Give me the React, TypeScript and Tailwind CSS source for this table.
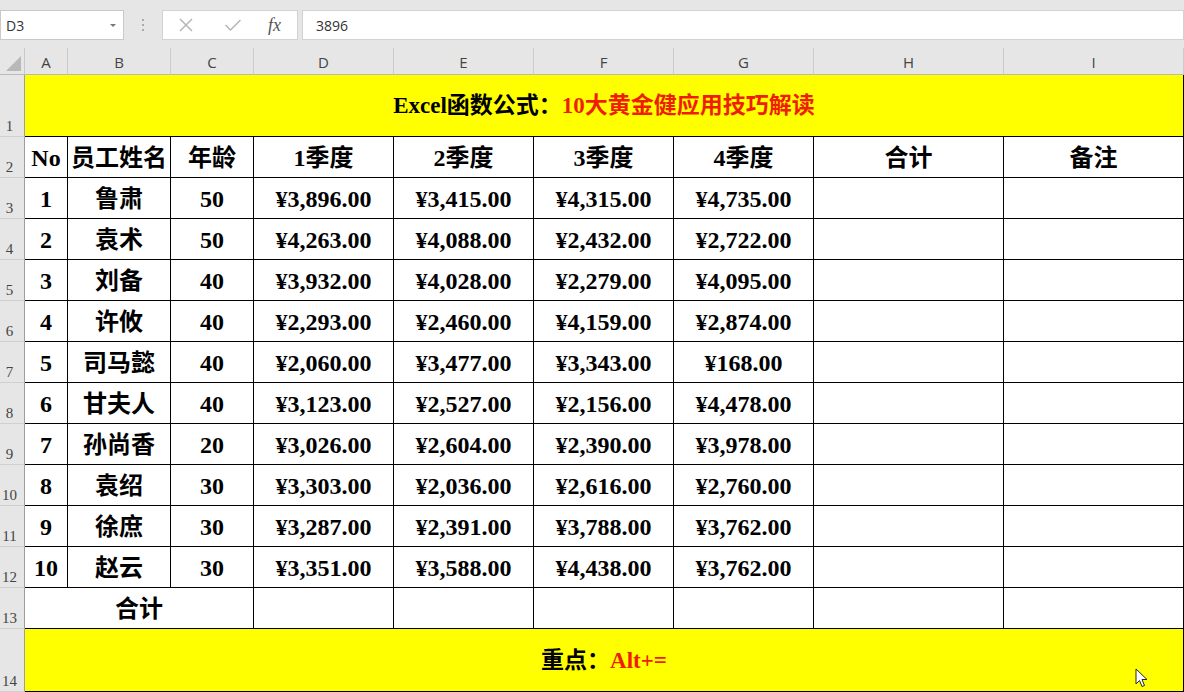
import React from 'react';

const COLS = ['A', 'B', 'C', 'D', 'E', 'F', 'G', 'H', 'I'];

const HEAD = ['No', '员工姓名', '年龄', '1季度', '2季度', '3季度', '4季度', '合计', '备注'];

const ROWS: [number, string, number, number[]][] = [
  [1, '鲁肃', 50, [3896, 3415, 4315, 4735]],
  [2, '袁术', 50, [4263, 4088, 2432, 2722]],
  [3, '刘备', 40, [3932, 4028, 2279, 4095]],
  [4, '许攸', 40, [2293, 2460, 4159, 2874]],
  [5, '司马懿', 40, [2060, 3477, 3343, 168]],
  [6, '甘夫人', 40, [3123, 2527, 2156, 4478]],
  [7, '孙尚香', 20, [3026, 2604, 2390, 3978]],
  [8, '袁绍', 30, [3303, 2036, 2616, 2760]],
  [9, '徐庶', 30, [3287, 2391, 3788, 3762]],
  [10, '赵云', 30, [3351, 3588, 4438, 3762]],
];

const yen = (n: number) =>
  '¥' + n.toLocaleString('en-US', { minimumFractionDigits: 2, maximumFractionDigits: 2 });

const cell =
  'flex items-center justify-center border-r border-b border-black bg-white pt-[2px] font-bold text-[24px] leading-[28px] text-black whitespace-nowrap';

function RowHead({ n }: { n: number }) {
  return (
    <div className="relative overflow-hidden border-b border-r border-b-[#cfcfcf] border-r-[#9e9e9e] bg-[#e6e6e6]">
      <span className="absolute bottom-[1px] left-0 w-[19px] text-center text-[15px] leading-[18px] text-[#444]">
        {n}
      </span>
    </div>
  );
}

export default function App() {
  return (
    <div
      className="relative h-[692px] w-[1184px] overflow-hidden bg-[#e6e6e6]"
      style={{ fontFamily: "'Liberation Serif', 'Noto Sans CJK SC', serif" }}
    >
      {/* formula bar */}
      <div
        className="flex h-[48px] items-start pt-[10px] text-[14px] text-[#333]"
        style={{ fontFamily: "'Open Sans', 'Liberation Sans', sans-serif" }}
      >
        <div className="flex h-[30px] w-[124px] items-center justify-between border border-[#c9c9c9] bg-white pl-[5px] pr-[6px]">
          <span>D3</span>
          <svg width="8" height="5" viewBox="0 0 8 5">
            <path d="M1 1 L4 4 L7 1 Z" fill="#777" />
          </svg>
        </div>
        <div className="flex h-[30px] w-[38px] flex-col items-center justify-center gap-[3px]">
          <span className="h-[2px] w-[2px] bg-[#aaa]" />
          <span className="h-[2px] w-[2px] bg-[#aaa]" />
          <span className="h-[2px] w-[2px] bg-[#aaa]" />
        </div>
        <div className="flex h-[30px] w-[136px] items-center border border-[#d2d2d2] bg-white">
          <svg className="ml-[15px]" width="16" height="16" viewBox="0 0 16 16">
            <path d="M2 2 L14 14 M14 2 L2 14" stroke="#b5b5b5" strokeWidth="1.5" />
          </svg>
          <svg className="ml-[30px]" width="18" height="16" viewBox="0 0 18 16">
            <path d="M1.5 8 L6.5 13 L16.5 3" stroke="#b5b5b5" strokeWidth="1.5" fill="none" />
          </svg>
          <span
            className="ml-[26px] text-[18px] italic text-[#555]"
            style={{ fontFamily: "'Liberation Serif', serif" }}
          >
            fx
          </span>
        </div>
        <div className="ml-[4px] flex h-[30px] flex-1 items-center border border-[#d2d2d2] bg-white pl-[13px]">
          3896
        </div>
      </div>

      {/* sheet */}
      <div className="grid grid-cols-[25px_43px_103px_83px_140px_140px_140px_140px_190px_180px] grid-rows-[27px_62px_repeat(12,41px)_63px]">
        {/* column header */}
        <div className="relative border-b border-r border-b-[#b9b9b9] border-r-[#c8c8c8] bg-[#e6e6e6]">
          <svg className="absolute bottom-[3px] right-[3px]" width="15" height="15" viewBox="0 0 15 15">
            <path d="M15 0 L15 15 L0 15 Z" fill="#b8b8b8" />
          </svg>
        </div>
        {COLS.map((c) => (
          <div
            key={c}
            className="flex items-end justify-center border-b border-r border-b-[#b9b9b9] border-r-[#cbcbcb] bg-[#e6e6e6] pb-[2px] text-[15px] leading-[20px] text-[#444]"
            style={{ fontFamily: "'Open Sans', 'Liberation Sans', sans-serif" }}
          >
            {c}
          </div>
        ))}

        {/* row 1 */}
        <RowHead n={1} />
        <div className="col-span-9 flex items-center justify-center border-b border-r border-black bg-[#ffff00] pt-[2px] text-[23px] font-bold">
          <span className="text-black">Excel函数公式：</span>
          <span className="text-[#f01e00]">10大黄金健应用技巧解读</span>
        </div>

        {/* row 2 */}
        <RowHead n={2} />
        {HEAD.map((h, i) => (
          <div key={i} className={cell}>
            {h}
          </div>
        ))}

        {ROWS.map(([no, name, age, q], r) => (
          <React.Fragment key={no}>
            <RowHead n={r + 3} />
            <div className={cell}>{no}</div>
            <div className={cell}>{name}</div>
            <div className={cell}>{age}</div>
            {q.map((v, i) => (
              <div key={i} className={cell}>
                {yen(v)}
              </div>
            ))}
            <div className={cell} />
            <div className={cell} />
          </React.Fragment>
        ))}

        {/* row 13 */}
        <RowHead n={13} />
        <div className={'col-span-3 ' + cell}>合计</div>
        {[0, 1, 2, 3, 4, 5].map((i) => (
          <div key={i} className={cell} />
        ))}

        {/* row 14 */}
        <RowHead n={14} />
        <div className="col-span-9 flex items-center justify-center border-b border-r border-black bg-[#ffff00] pt-[2px] text-[23px] font-bold">
          <span className="text-black">重点：</span>
          <span className="text-[#f01e00]">Alt+=</span>
        </div>
      </div>

      {/* mouse pointer */}
      <svg className="absolute left-[1135px] top-[668px]" width="14" height="21" viewBox="0 0 14 21">
        <path
          d="M1 1 L1 16 L4.5 12.5 L7 18.5 L9.5 17.5 L7 11.5 L12 11.5 Z"
          fill="#fff"
          stroke="#222"
          strokeWidth="1"
          strokeLinejoin="round"
        />
      </svg>
    </div>
  );
}
